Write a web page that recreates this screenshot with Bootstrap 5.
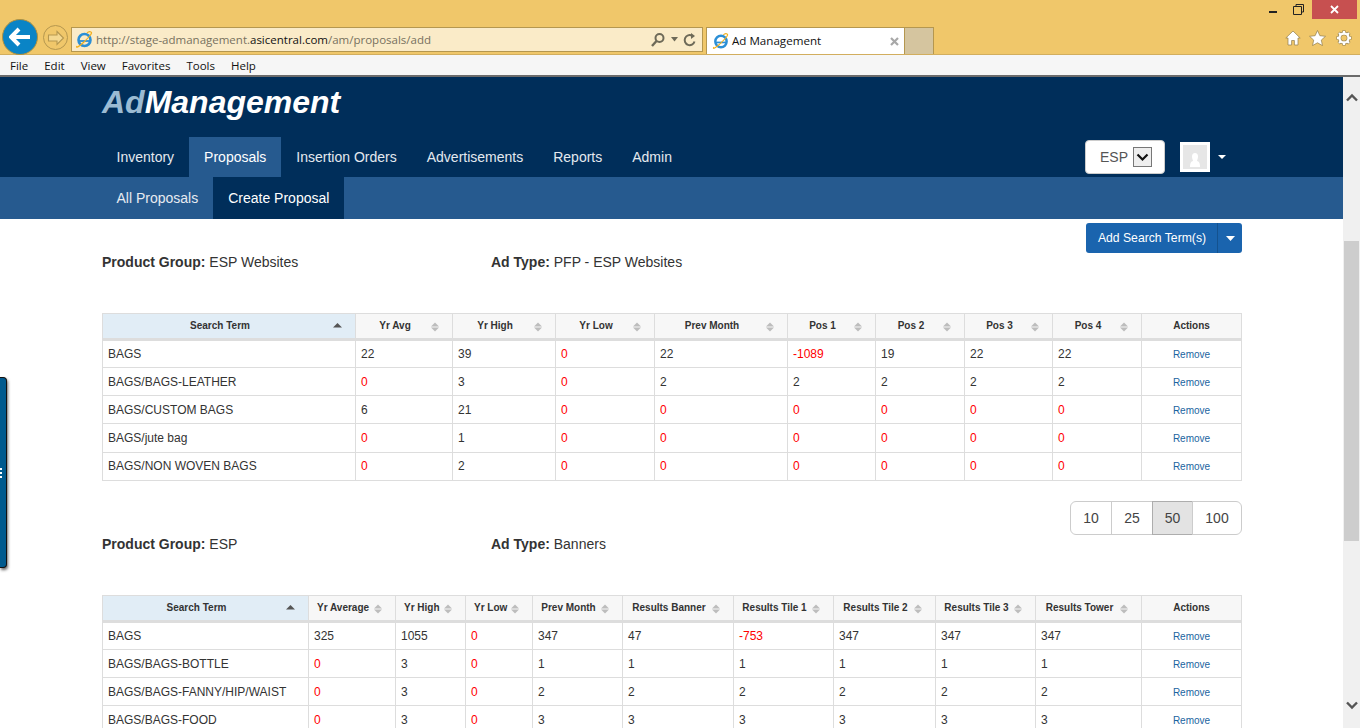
<!DOCTYPE html>
<html lang="en">
<head>
  <meta charset="UTF-8" />
  <title>Ad Management</title>
  <link href="https://cdn.jsdelivr.net/npm/bootstrap@5.3.0/dist/css/bootstrap.min.css" rel="stylesheet">
  <style>
    html, body { height: 728px; overflow: hidden; }
    body { font-family: "Liberation Sans", Arial, sans-serif; font-size: 14px; color: #333; background: #fff; }

    /* browser frame */
    .ie-top { height: 55px; background: #f0c76a; border-bottom: 1px solid #d2ae5e; }
    .ie-toolbar { padding: 19px 0 0 2px; height: 54px; }
    .ie-back { width: 36px; height: 36px; border-radius: 50%; background: #0a84c6; border: 1px solid #b0913f; flex: none; }
    .ie-fwd { width: 25px; height: 25px; border-radius: 50%; border: 1px solid #b5974f; margin: 6px 0 0 5px; flex: none; }
    .ie-addr { width: 632px; height: 25px; margin: 8px 0 0 3px; background: #faebc8; border: 1px solid #b5974f; padding: 0 5px 0 3px; font-family: "Open Sans", sans-serif; font-size: 11.5px; color: #77715f; flex: none; }
    .ie-addr b { font-weight: 400; color: #111; }
    .addr-ic { margin-right: 3px; flex: none; }
    .ie-tab { width: 199px; height: 27px; margin: 8px 0 0 3px; background: #fff; border: 1px solid #b5974f; border-bottom: 0; padding: 0 5px; font-family: "Open Sans", sans-serif; font-size: 11.6px; color: #111; flex: none; }
    .tab-ic { margin-right: 3px; flex: none; }
    .ie-newtab { width: 29px; height: 27px; margin-top: 8px; background: #d5c59f; border: 1px solid #b5974f; border-left: 0; border-bottom: 0; flex: none; }
    .ie-tools { margin: 11px 8px 0 auto; gap: 8px; }
    .gear-ic { margin-left: 2px; }
    .ie-close { width: 45px; height: 19px; background: #c75050; }
    .ie-winbtns { position: absolute; top: 0; right: 3px; }
    .win-min { margin-top: 10px; }
    .win-max { margin: 4px 8px 0 16px; }
    .ie-menu { height: 22px; background: #f6f6f6; border-bottom: 2px solid #6b6b6b; font-family: "Open Sans", sans-serif; font-size: 11.5px; color: #111; padding: 2px 0 0 10px; gap: 16px; }

    /* page header */
    .view { height: 651px; }
    .page-area { width: 1343px; overflow: hidden; position: relative; flex: none; }
    .v-scroll { width: 17px; background: #f0f0f0; flex: none; }
    .v-thumb { width: 15px; height: 300px; background: #cdcdcd; margin: 139px auto 0; }
    .arrow-up { margin-top: 16px; flex: none; }
    .arrow-down { margin: auto 0 18px; flex: none; }
    .top-head { height: 100px; background: #002e5a; padding-left: 101.5px; }
    .ad-logo { font-size: 32px; font-weight: 700; font-style: italic; color: #fff; line-height: 38px; padding: 6px 0 0 .5px; height: 60px; }
    .ad-logo span { color: #9bbbd3; }
    .ad-tabs a { display: block; height: 40px; line-height: 40px; padding: 0 15px; color: #e4e9ef; text-decoration: none; }
    .ad-tabs a.on { background: #265a8f; color: #fff; }
    .sub-head { height: 42px; background: #265a8f; padding-left: 101.5px; }
    .sub-head a { display: block; height: 42px; line-height: 42px; padding: 0 15px; color: #e6ebf1; text-decoration: none; }
    .sub-head a.on { background: #002e5a; color: #fff; }
    .head-tools { position: absolute; top: 63px; left: 1085px; }
    .esp-box { width: 80px; height: 34px; background: #fff; border: 1px solid #ccc; border-radius: 4px; color: #555; padding-left: 14px; gap: 5px; }
    .esp-arrow { width: 19px; height: 20px; border: 1px solid #777; background: #eee; }
    .user-pic { width: 30px; height: 30px; background: #e6e6e6; border: 3px solid #fff; margin-left: 15px; }
    .caret-w { width: 0; height: 0; border: 4.5px solid transparent; border-top: 4.5px solid #fff; border-bottom: 0; margin-left: 8px; }

    /* content */
    .main-wrap { width: 1140px; margin-left: 102px; }
    .btn-term { background: #1a64ae; color: #fff; font-size: 12.2px; width: 132px; height: 30px; padding: 0; border: 0; border-radius: 3px 0 0 3px; }
    .btn-term-c { width: 25px; height: 30px; padding: 0; background: #1a64ae; border: 0; border-left: 1px solid #14528f; border-radius: 0 3px 3px 0; }
    .btn-term:hover, .btn-term-c:hover { background: #1a64ae; color: #fff; }
    .info-line { line-height: 18px; height: 60px; color: #333; }
    .info-line > div:first-child { width: 389px; }
    .ad-grid { table-layout: fixed; width: 1140px; margin: 0; font-size: 12px; border-color: #ddd; color: #333; }
    .ad-grid > :not(caption) > * > * { padding: 0 5px; height: 28px; vertical-align: middle; color: #333; box-shadow: none; border-color: #ddd; }
    .ad-grid > thead > tr > th { height: 26px; padding: 0 26px 2px 8px; background: #f7f7f7; font-size: 10px; font-weight: 700; text-align: center; white-space: nowrap; position: relative; border-bottom: 3px solid #ddd; color: #333; }
    .ad-grid > thead > tr > th.sorted { background: #e1edf6; }
    .ad-grid > thead > tr > th.no-sort { padding: 0 4px 2px; }
    .ad-grid > tbody > tr > td.neg { color: #f00; }
    .ad-grid > tbody > tr > td.act { text-align: center; font-size: 10px; padding-top: 1px; }
    .act a { color: #1a64a0; text-decoration: none; }
    .first-grid tbody tr:nth-child(4) td { height: 29px; }
    .first-grid tbody tr:nth-child(5) td { padding-bottom: 2px; }
    .sort-ic { position: absolute; right: 13px; top: 8px; }
    .size-bar { height: 34px; margin-top: 20px; }
    .size-bar .btn { background: #fff; border-color: #ccc; color: #444; font-size: 14px; height: 34px; padding: 0; line-height: 32px; flex: none; }
    .size-bar .btn.on { background: #e3e3e3; border-color: #adadad; }
    .pg-42 { width: 42px; }
    .pg-41 { width: 41px; }
    .pg-last { width: 50px; }
    .side-tab { position: absolute; left: 0; top: 300px; width: 7px; height: 191px; background: #005a8e; border: 1px solid #111; border-left: 0; border-radius: 0 4px 4px 0; box-shadow: 1px 2px 3px rgba(0,0,0,.6); }
    .side-dots { position: absolute; left: 0; top: 90px; width: 2px; height: 10px; background: repeating-linear-gradient(#fff 0 2px, transparent 2px 4px); }
  </style>
</head>
<body>

  <div class="ie-top position-relative">
    <div class="ie-toolbar d-flex align-items-start">
      <div class="ie-back d-flex align-items-center justify-content-center">
        <svg width="22" height="20" viewBox="0 0 22 20"><path d="M10 2 2 10l8 8M3 10h18" fill="none" stroke="#fff" stroke-width="4"/></svg>
      </div>
      <div class="ie-fwd d-flex align-items-center justify-content-center">
        <svg width="18" height="16" viewBox="0 0 18 16"><path d="M10 1.500 16.500 8 10 14.500V11H1.500V5H10z" fill="#f4d890" stroke="#b5974f" stroke-width="1.100"/></svg>
      </div>
      <div class="ie-addr d-flex align-items-center">
        <svg class="addr-ic" width="18" height="18" viewBox="0 0 18 18"><circle cx="9.500" cy="9" r="6" fill="none" stroke="#2b8fd6" stroke-width="2.600"/><path d="M4 10h11" stroke="#2b8fd6" stroke-width="1.800"/><path d="M2 15C0 18 5 15 9 11c5-5 9-9 7-10-1-.6-3 0-4 1" fill="none" stroke="#f2b01e" stroke-width="1.200"/></svg>
        <span class="flex-grow-1">http://stage-admanagement.<b>asicentral.com</b>/am/proposals/add</span>
        <svg width="16" height="16" viewBox="0 0 16 16"><circle cx="9.500" cy="6" r="4" fill="none" stroke="#6e6a58" stroke-width="2"/><path d="M6.500 9 2 14" stroke="#6e6a58" stroke-width="2.400"/></svg>
        <svg class="mx-1" width="9" height="5" viewBox="0 0 9 5"><path d="M1 0h7L4.500 4.500z" fill="#6e6a58"/></svg>
        <svg width="14" height="14" viewBox="0 0 14 14"><path d="M11.500 8.500A5 5 0 1 1 9 2.700" fill="none" stroke="#6e6a58" stroke-width="2"/><path d="M8 0v6l4-3z" fill="#6e6a58"/></svg>
      </div>
      <div class="ie-tab d-flex align-items-center">
        <svg class="tab-ic" width="17" height="17" viewBox="0 0 18 18"><circle cx="9.500" cy="9" r="6" fill="none" stroke="#2b8fd6" stroke-width="2.600"/><path d="M4 10h11" stroke="#2b8fd6" stroke-width="1.800"/><path d="M2 15C0 18 5 15 9 11c5-5 9-9 7-10-1-.6-3 0-4 1" fill="none" stroke="#f2b01e" stroke-width="1.200"/></svg>
        <span class="flex-grow-1">Ad Management</span>
        <svg width="9" height="9" viewBox="0 0 9 9"><path d="M1 1l7 7M8 1 1 8" stroke="#a8a8a8" stroke-width="2.200"/></svg>
      </div>
      <div class="ie-newtab"></div>
      <div class="ie-tools d-flex align-items-center">
        <svg width="16" height="16" viewBox="0 0 16 16"><path d="M8 1 .8 8H3v7h3.600v-4.500h2.800V15H13V8h2.200z" fill="#fff" stroke="#8f7c4c" stroke-width=".7"/></svg>
        <svg width="17" height="16" viewBox="0 0 17 16"><path d="m8.500.5 2.400 5.200 5.600.6-4.200 3.800 1.200 5.500-5-2.800-5 2.800 1.200-5.500L.5 6.300l5.600-.6z" fill="#fff" stroke="#8f7c4c" stroke-width=".7"/></svg>
        <svg class="gear-ic" width="16" height="16" viewBox="0 0 16 16"><g fill="none" stroke="#8f7c4c" stroke-width="3.400"><circle cx="8" cy="8" r="4.500"/><path d="M8 .5v3M8 12.500v3M.5 8h3M12.500 8h3M2.700 2.700l2.100 2.100M11.200 11.200l2.100 2.100M13.300 2.700l-2.100 2.100M4.800 11.200l-2.100 2.100"/></g><g fill="none" stroke="#fff" stroke-width="2.300"><circle cx="8" cy="8" r="4.500"/><path d="M8 1v3M8 12v3M1 8h3M12 8h3M3 3l2 2M11 11l2 2M13 3l-2 2M5 11l-2 2"/></g></svg>
      </div>
    </div>
    <div class="ie-winbtns d-flex align-items-start">
      <svg class="win-min" width="8" height="4" viewBox="0 0 8 4"><rect y="1" width="8" height="2" fill="#222"/></svg>
      <svg class="win-max" width="11" height="11" viewBox="0 0 11 11"><path d="M3 2.500V.5h7.500V8H8.500M.5 2.500h8v8h-8z" fill="none" stroke="#222"/></svg>
      <div class="ie-close d-flex align-items-center justify-content-center">
        <svg width="9" height="9" viewBox="0 0 9 9"><path d="m1 1 7 7M8 1 1 8" stroke="#fff" stroke-width="1.800"/></svg>
      </div>
    </div>
  </div>

  <div class="ie-menu d-flex align-items-center">
    <span>File</span><span>Edit</span><span>View</span><span>Favorites</span><span>Tools</span><span>Help</span>
  </div>

  <div class="view d-flex">
    <div class="page-area">
      <div class="top-head">
        <div class="ad-logo"><span>Ad</span>Management</div>
        <div class="ad-tabs d-flex">
          <a href="#">Inventory</a>
          <a href="#" class="on">Proposals</a>
          <a href="#">Insertion Orders</a>
          <a href="#">Advertisements</a>
          <a href="#">Reports</a>
          <a href="#">Admin</a>
        </div>
      </div>
      <div class="sub-head d-flex">
        <a href="#">All Proposals</a>
        <a href="#" class="on">Create Proposal</a>
      </div>
      <div class="head-tools d-flex align-items-center">
        <div class="esp-box d-flex align-items-center">
          <span>ESP</span>
          <span class="esp-arrow d-flex align-items-center justify-content-center">
            <svg width="13" height="9" viewBox="0 0 13 9"><path d="m1.500 1.500 5 5 5-5" fill="none" stroke="#111" stroke-width="2.200"/></svg>
          </span>
        </div>
        <div class="user-pic d-flex align-items-end justify-content-center">
          <svg width="16" height="17" viewBox="0 0 16 17"><path d="M8 1c2 0 3 1.500 3 3.500S10 8 10 9c2 .5 3 2 3 6H3c0-4 1-5.500 3-6 0-1-1-2.500-1-4.500S6 1 8 1z" fill="#fff"/></svg>
        </div>
        <span class="caret-w"></span>
      </div>

      <div class="main-wrap">
        <div class="d-flex justify-content-end pt-1">
          <div class="btn-group">
            <button class="btn btn-term">Add Search Term(s)</button>
            <button class="btn btn-term-c d-flex align-items-center justify-content-center">
              <svg width="9" height="5" viewBox="0 0 9 5"><path d="M0 0h9L4.500 5z" fill="#fff"/></svg>
            </button>
          </div>
        </div>
        <div class="info-line d-flex">
          <div><b>Product Group:</b> ESP Websites</div>
          <div><b>Ad Type:</b> PFP - ESP Websites</div>
        </div>

        <table class="table table-bordered ad-grid first-grid">
          <colgroup id="cols1"></colgroup>
          <thead>
            <tr>
              <th class="sorted">Search Term</th><th>Yr Avg</th><th>Yr High</th><th>Yr Low</th><th>Prev Month</th><th>Pos 1</th><th>Pos 2</th><th>Pos 3</th><th>Pos 4</th><th class="no-sort">Actions</th>
            </tr>
          </thead>
          <tbody>
            <tr><td>BAGS</td><td>22</td><td>39</td><td class="neg">0</td><td>22</td><td class="neg">-1089</td><td>19</td><td>22</td><td>22</td><td class="act"><a href="#">Remove</a></td></tr>
            <tr><td>BAGS/BAGS-LEATHER</td><td class="neg">0</td><td>3</td><td class="neg">0</td><td>2</td><td>2</td><td>2</td><td>2</td><td>2</td><td class="act"><a href="#">Remove</a></td></tr>
            <tr><td>BAGS/CUSTOM BAGS</td><td>6</td><td>21</td><td class="neg">0</td><td class="neg">0</td><td class="neg">0</td><td class="neg">0</td><td class="neg">0</td><td class="neg">0</td><td class="act"><a href="#">Remove</a></td></tr>
            <tr><td>BAGS/jute bag</td><td class="neg">0</td><td>1</td><td class="neg">0</td><td class="neg">0</td><td class="neg">0</td><td class="neg">0</td><td class="neg">0</td><td class="neg">0</td><td class="act"><a href="#">Remove</a></td></tr>
            <tr><td>BAGS/NON WOVEN BAGS</td><td class="neg">0</td><td>2</td><td class="neg">0</td><td class="neg">0</td><td class="neg">0</td><td class="neg">0</td><td class="neg">0</td><td class="neg">0</td><td class="act"><a href="#">Remove</a></td></tr>
          </tbody>
        </table>

        <div class="size-bar d-flex justify-content-end">
          <div class="btn-group">
            <button class="btn pg-42">10</button>
            <button class="btn pg-42">25</button>
            <button class="btn pg-41 on">50</button>
            <button class="btn pg-last">100</button>
          </div>
        </div>
        <div class="info-line d-flex">
          <div><b>Product Group:</b> ESP</div>
          <div><b>Ad Type:</b> Banners</div>
        </div>

        <table class="table table-bordered ad-grid">
          <colgroup id="cols2"></colgroup>
          <thead>
            <tr>
              <th class="sorted">Search Term</th><th>Yr Average</th><th>Yr High</th><th>Yr Low</th><th>Prev Month</th><th>Results Banner</th><th>Results Tile 1</th><th>Results Tile 2</th><th>Results Tile 3</th><th>Results Tower</th><th class="no-sort">Actions</th>
            </tr>
          </thead>
          <tbody>
            <tr><td>BAGS</td><td>325</td><td>1055</td><td class="neg">0</td><td>347</td><td>47</td><td class="neg">-753</td><td>347</td><td>347</td><td>347</td><td class="act"><a href="#">Remove</a></td></tr>
            <tr><td>BAGS/BAGS-BOTTLE</td><td class="neg">0</td><td>3</td><td class="neg">0</td><td>1</td><td>1</td><td>1</td><td>1</td><td>1</td><td>1</td><td class="act"><a href="#">Remove</a></td></tr>
            <tr><td>BAGS/BAGS-FANNY/HIP/WAIST</td><td class="neg">0</td><td>3</td><td class="neg">0</td><td>2</td><td>2</td><td>2</td><td>2</td><td>2</td><td>2</td><td class="act"><a href="#">Remove</a></td></tr>
            <tr><td>BAGS/BAGS-FOOD</td><td class="neg">0</td><td>3</td><td class="neg">0</td><td>3</td><td>3</td><td>3</td><td>3</td><td>3</td><td>3</td><td class="act"><a href="#">Remove</a></td></tr>
          </tbody>
        </table>
      </div>

      <div class="side-tab"><span class="side-dots"></span></div>
    </div>

    <div class="v-scroll d-flex flex-column align-items-center">
      <svg class="arrow-up" width="12" height="9" viewBox="0 0 12 9"><path d="m1 7.500 5-5 5 5" fill="none" stroke="#555" stroke-width="2.400"/></svg>
      <div class="v-thumb"></div>
      <svg class="arrow-down" width="12" height="9" viewBox="0 0 12 9"><path d="m1 1.500 5 5 5-5" fill="none" stroke="#555" stroke-width="2.400"/></svg>
    </div>
  </div>

  <script>
    // column widths taken from the grid, sort arrows added to each sortable header
    const widths = {
      cols1: [253, 97, 103, 99, 133, 88, 89, 88, 89, 100],
      cols2: [206, 87, 70, 67, 90, 111, 100, 102, 100, 106, 100]
    };
    Object.keys(widths).forEach(id => {
      const group = document.getElementById(id);
      widths[id].forEach(w => {
        const c = document.createElement('col');
        c.style.width = w + 'px';
        group.appendChild(c);
      });
    });

    document.querySelectorAll('.ad-grid th:not(.no-sort)').forEach(th => {
      const sorted = th.classList.contains('sorted');
      th.insertAdjacentHTML('beforeend', sorted
        ? '<svg class="sort-ic" width="9" height="10" viewBox="0 0 9 10"><path d="M0 5.500h9L4.500 1z" fill="#555"/></svg>'
        : '<svg class="sort-ic" width="8" height="10" viewBox="0 0 8 10"><path d="M0 4.500h8L4 .5zM0 5.500h8L4 9.500z" fill="#bdbdbd"/></svg>');
    });
  </script>
</body>
</html>
